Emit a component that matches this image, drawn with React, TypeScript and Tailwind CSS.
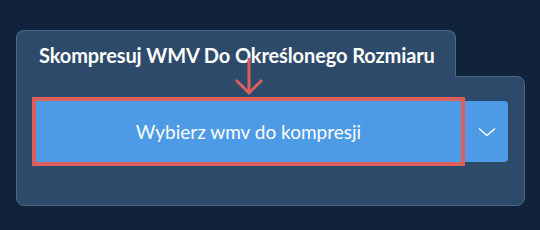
import React from "react";

export default function App() {
  return (
    <div className="w-[540px] h-[230px] bg-[#11233a] relative overflow-hidden" style={{ fontFamily: "Lato, 'Open Sans', sans-serif" }}>
      <div className="pt-[30px] pl-4 w-[525px]">
        <div className="relative z-10 -mb-px w-[440px] h-[47px] bg-[#2d4a6a] border border-b-0 border-[#4b6888] rounded-t-lg pl-[22px] pt-[14px]">
          <span className="block text-white font-bold text-[20px] leading-none tracking-[-0.1px]">Skompresuj WMV Do Określonego Rozmiaru</span>
        </div>
        <div className="bg-[#2d4a6a] border border-[#4b6888] rounded-b-lg rounded-tr-lg h-[130px] pl-[15px] pt-5">
          <div className="flex items-center">
            <button className="w-[433px] h-[69px] border-4 border-[#db5f5a] bg-[#4d9ae6] text-white text-[19px] font-normal flex items-center justify-center pt-px">
              Wybierz wmv do kompresji
            </button>
            <button className="w-[43px] h-[61px] bg-[#4d9ae6] rounded-r flex items-center justify-center">
              <svg width="18" height="10" viewBox="0 0 18 10" fill="none">
                <path d="M1 1.5 L9 8.5 L17 1.5" stroke="white" strokeWidth="1.5" />
              </svg>
            </button>
          </div>
        </div>
      </div>
      <svg className="absolute z-20 left-[234px] top-[58px]" width="30" height="38" viewBox="0 0 30 38" fill="none">
        <path d="M15 0 L15 35" stroke="#db5f5a" strokeWidth="3" />
        <path d="M2 22 L15 35 L28 22" stroke="#db5f5a" strokeWidth="3" />
      </svg>
    </div>
  );
}
